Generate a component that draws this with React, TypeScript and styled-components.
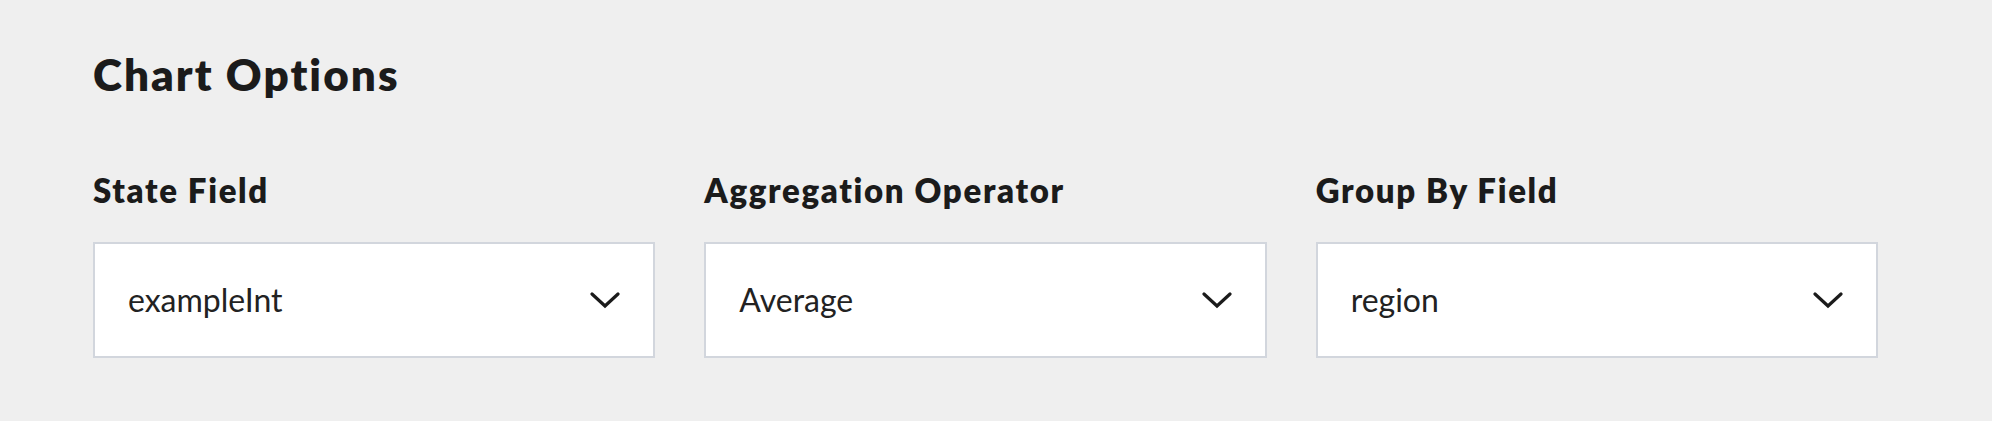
import React from "react";
import styled, { createGlobalStyle } from "styled-components";

const GlobalStyle = createGlobalStyle`
  html, body {
    margin: 0;
    padding: 0;
    background: #efefef;
  }
  body {
    font-family: Lato, "Open Sans", "Liberation Sans", sans-serif;
    color: #1b1b1b;
  }
`;

const Page = styled.section`
  box-sizing: border-box;
  width: 100%;
  padding: 48px 114px 0 93px;
`;

const Title = styled.h2`
  margin: 0;
  font-size: 44px;
  line-height: 52px;
  font-weight: 800;
  letter-spacing: 2.05px;
  color: #1b1b1b;
`;

const Fields = styled.div`
  display: grid;
  grid-template-columns: repeat(3, 1fr);
  column-gap: 49px;
  margin-top: 70px;
`;

const Field = styled.div`
  display: flex;
  flex-direction: column;
`;

const Label = styled.label`
  font-size: 33px;
  line-height: 40px;
  font-weight: 800;
  letter-spacing: 1.65px;
  color: #1b1b1b;
  margin-bottom: 32px;
`;

const SelectBox = styled.button`
  box-sizing: border-box;
  height: 116px;
  display: flex;
  align-items: center;
  justify-content: space-between;
  padding: 0 33px 0 33px;
  background: #ffffff;
  border: 2px solid #d2d6dd;
  border-radius: 0;
  font-family: inherit;
  cursor: pointer;
`;

const Value = styled.span`
  font-size: 32px;
  font-weight: 400;
  color: #222222;
  margin-top: -2px;
`;

const Chevron = styled.svg`
  width: 30px;
  height: 18px;
  flex: none;
`;

const ChevronIcon = () => (
  <Chevron viewBox="0 0 30 18" aria-hidden="true">
    <polyline
      points="2,3 15,15 28,3"
      fill="none"
      stroke="#1b1b1b"
      strokeWidth="3.2"
      strokeLinecap="round"
      strokeLinejoin="miter"
    />
  </Chevron>
);

const fields = [
  { label: "State Field", value: "exampleInt" },
  { label: "Aggregation Operator", value: "Average" },
  { label: "Group By Field", value: "region" },
];

export default function App() {
  return (
    <>
      <GlobalStyle />
      <Page>
        <Title>Chart Options</Title>
        <Fields>
          {fields.map((f) => (
            <Field key={f.label}>
              <Label>{f.label}</Label>
              <SelectBox type="button">
                <Value>{f.value}</Value>
                <ChevronIcon />
              </SelectBox>
            </Field>
          ))}
        </Fields>
      </Page>
    </>
  );
}
